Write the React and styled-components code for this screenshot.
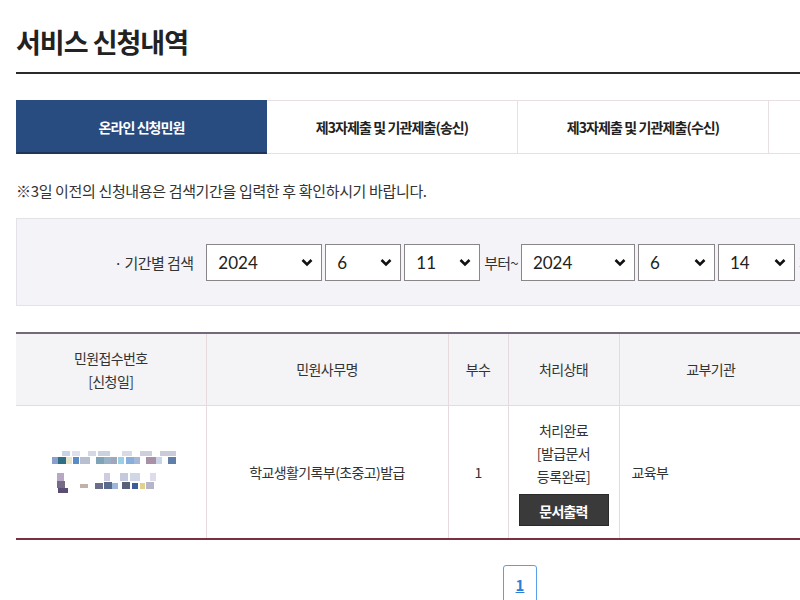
import React from "react";
import styled, { createGlobalStyle } from "styled-components";

const Global = createGlobalStyle`
  html, body { margin: 0; padding: 0; background: #fff; overflow: hidden; }
  body { font-family: "Noto Sans CJK KR", "Noto Sans", sans-serif; color: #333; }
`;

const Page = styled.div`
  width: 1010px;
  padding: 0 0 0 16px;
`;

const Title = styled.h1`
  margin: 0;
  padding-top: 22px;
  height: 50px;
  font-size: 27px;
  font-weight: 700;
  letter-spacing: -1px;
  color: #222;
  line-height: 40px;
  border-bottom: 2px solid #2b2b2b;
`;

const Tabs = styled.div`
  display: flex;
  margin-top: 26px;
  height: 54px;
`;

const Tab = styled.div`
  flex: 0 0 251px;
  display: flex;
  align-items: center;
  justify-content: center;
  font-size: 14px;
  font-weight: 700;
  letter-spacing: -0.9px;
  box-sizing: border-box;
  color: ${(p) => (p.$active ? "#fff" : "#222")};
  background: ${(p) => (p.$active ? "#284b80" : "#fff")};
  border: 1px solid ${(p) => (p.$active ? "#284b80" : "#e7dfe2")};
  border-left: ${(p) => (p.$active ? "1px solid #284b80" : "none")};
  border-bottom: ${(p) => (p.$active ? "2px solid #1f3457" : "1px solid #e7dfe2")};
`;

const Note = styled.p`
  margin: 26px 0 0;
  font-size: 15px;
  letter-spacing: -0.35px;
  color: #333;
  line-height: 22px;
`;

const SearchBox = styled.div`
  margin-top: 16px;
  height: 88px;
  box-sizing: border-box;
  background: #f4f3f7;
  border: 1px solid #e4e2e8;
  display: flex;
  align-items: center;
  padding-left: 97px;
  gap: 3px;
`;

const Label = styled.span`
  font-size: 15px;
  letter-spacing: -0.6px;
  color: #333;
  margin-right: 10px;
`;

const Inline = styled.span`
  font-size: 15px;
  letter-spacing: -0.8px;
  color: #333;
  margin-left: 1px;
`;

const SelectBox = styled.div`
  width: ${(p) => p.$w}px;
  height: 37px;
  box-sizing: border-box;
  border: 1px solid #8a8589;
  background: #fff;
  display: flex;
  align-items: center;
  justify-content: space-between;
  padding: 0 8px 0 11px;
  font-family: "Lato", "Noto Sans", sans-serif;
  font-size: 17px;
  color: #222;
`;

const Chevron = () => (
  <svg width="12" height="9" viewBox="0 0 12 9">
    <path d="M1.5 2 L6 6.5 L10.5 2" fill="none" stroke="#111" strokeWidth="2.6" />
  </svg>
);

const Select = ({ w, value }) => (
  <SelectBox $w={w}>
    <span>{value}</span>
    <Chevron />
  </SelectBox>
);

const Table = styled.table`
  margin-top: 26px;
  width: 786px;
  table-layout: fixed;
  border-collapse: collapse;
  border-top: 2px solid #76687a;
  border-bottom: 2px solid #7a3040;
  font-size: 14px;
  letter-spacing: -0.6px;
  color: #333;
`;

const Th = styled.th`
  height: 71px;
  padding: 0;
  background: #f4f3f5;
  font-weight: 400;
  line-height: 23px;
  border-left: 1px solid #e6dade;
  border-bottom: 1px solid #e6dade;
  &:first-child { border-left: none; }
`;

const Td = styled.td`
  height: 130px;
  text-align: ${(p) => p.$align || "center"};
  padding: ${(p) => (p.$align === "left" ? "0 12px" : "0")};
  line-height: 23px;
  border-left: 1px solid #e6dade;
  &:first-child { border-left: none; }
`;

const PrintButton = styled.div`
  display: inline-block;
  margin-top: 6px;
  width: 90px;
  height: 32px;
  line-height: 32px;
  background: #3b3a3a;
  border: 1px solid #2a2a2a;
  box-sizing: border-box;
  color: #fff;
  font-weight: 700;
  font-size: 14px;
  letter-spacing: -0.8px;
`;

const Pager = styled.div`
  display: flex;
  justify-content: center;
  padding-top: 25px;
  width: 1040px;
`;

const PageNum = styled.a`
  display: flex;
  align-items: flex-start;
  justify-content: center;
  padding-top: 8px;
  width: 34px;
  height: 40px;
  box-sizing: border-box;
  border: 1px solid #5aa0e6;
  border-radius: 3px;
  color: #2a7fd6;
  font-weight: 700;
  font-size: 15px;
  text-decoration: underline;
`;

const Mosaic = () => {
  const row1 = [
    ["#c9d2e6", 62, 450, 8, 5], ["#dde2ee", 72, 450, 8, 5], ["#d3d8e6", 88, 450, 8, 5],
    ["#ccd1e0", 98, 450, 12, 5], ["#d7dbe8", 122, 450, 10, 5], ["#cdd0dc", 140, 450, 12, 5], ["#c8ccd8", 160, 450, 16, 5],
    ["#8a9fd0", 52, 456, 6, 7], ["#2e6f86", 58, 456, 8, 7], ["#e9e3c8", 66, 456, 6, 7], ["#5a8cc8", 73, 456, 6, 7],
    ["#b8bfd0", 80, 456, 10, 7], ["#7fa3b8", 96, 456, 8, 7], ["#9ab0c4", 104, 456, 7, 7], ["#a0a7bb", 111, 456, 6, 7],
    ["#9ad0e6", 118, 456, 6, 7], ["#88aedc", 126, 456, 8, 7], ["#a6b8d8", 134, 456, 6, 7], ["#a890a8", 146, 456, 10, 7],
    ["#c9d4e6", 156, 456, 6, 7], ["#5f7fa8", 168, 456, 8, 7],
  ];
  const row2 = [
    ["#b7a9c4", 57, 472, 7, 8], ["#d0cce0", 104, 472, 6, 8], ["#c6c9dc", 120, 472, 8, 8], ["#d2d7e6", 130, 472, 10, 8],
    ["#dcdcea", 150, 472, 6, 8],
    ["#756a8a", 57, 480, 8, 7], ["#5c4e72", 58, 487, 10, 5], ["#c3b0a8", 80, 483, 8, 4], ["#6b6d88", 95, 482, 8, 6],
    ["#5a6a8e", 104, 481, 8, 7], ["#9cb6dc", 112, 482, 6, 6], ["#5a6078", 122, 481, 8, 7], ["#3e5c9a", 132, 482, 6, 6],
    ["#e0d28a", 140, 482, 5, 6], ["#b6b4c8", 146, 481, 8, 7],
  ];
  return (
    <svg width="190" height="132" viewBox="0 405 190 132" style={{ display: "block" }}>
      {[...row1, ...row2].map(([c, x, y, w, h], i) => (
        <rect key={i} x={x - 16} y={y} width={w} height={h} fill={c} />
      ))}
    </svg>
  );
};

export default function App() {
  return (
    <>
      <Global />
      <Page>
        <Title>서비스 신청내역</Title>
        <Tabs>
          <Tab $active>온라인 신청민원</Tab>
          <Tab>제3자제출 및 기관제출(송신)</Tab>
          <Tab>제3자제출 및 기관제출(수신)</Tab>
          <Tab />
        </Tabs>
        <Note>※3일 이전의 신청내용은 검색기간을 입력한 후 확인하시기 바랍니다.</Note>
        <SearchBox>
          <Label>· 기간별 검색</Label>
          <Select w={116} value="2024" />
          <Select w={76} value="6" />
          <Select w={76} value="11" />
          <Inline>부터~</Inline>
          <Select w={114} value="2024" />
          <Select w={77} value="6" />
          <Select w={77} value="14" />
          <Inline>까지</Inline>
        </SearchBox>
        <Table>
          <colgroup>
            <col style={{ width: 190 }} />
            <col style={{ width: 242 }} />
            <col style={{ width: 60 }} />
            <col style={{ width: 111 }} />
            <col />
          </colgroup>
          <thead>
            <tr>
              <Th>민원접수번호<br />[신청일]</Th>
              <Th>민원사무명</Th>
              <Th>부수</Th>
              <Th>처리상태</Th>
              <Th>교부기관</Th>
            </tr>
          </thead>
          <tbody>
            <tr>
              <Td><Mosaic /></Td>
              <Td>학교생활기록부(초중고)발급</Td>
              <Td>1</Td>
              <Td>
                처리완료<br />[발급문서<br />등록완료]<br />
                <PrintButton>문서출력</PrintButton>
              </Td>
              <Td $align="left">교육부</Td>
            </tr>
          </tbody>
        </Table>
      </Page>
      <Pager>
        <PageNum>1</PageNum>
      </Pager>
    </>
  );
}
